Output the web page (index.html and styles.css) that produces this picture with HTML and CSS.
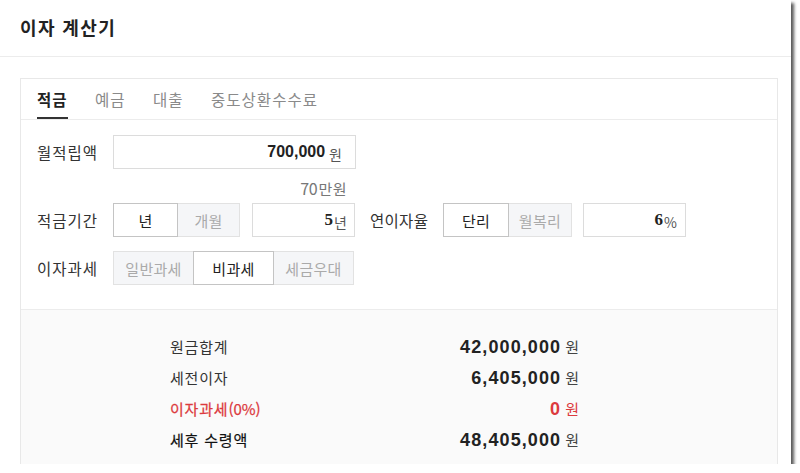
FILE: index.html
```html
<!DOCTYPE html>
<html lang="ko">
<head>
<meta charset="utf-8">
<title>이자 계산기</title>
<link rel="stylesheet" href="styles.css">
</head>
<body>
<div class="frame">
  <header class="title-bar"><h1 class="title">이자 계산기</h1></header>
  <section class="card">
    <nav class="tabs">
      <span class="tab active">적금</span>
      <span class="tab">예금</span>
      <span class="tab">대출</span>
      <span class="tab">중도상환수수료</span>
    </nav>
    <div class="form">
      <div class="row">
        <span class="label">월적립액</span>
        <div class="field field-wide"><b class="num">700,000</b><span class="unit">원</span></div>
      </div>
      <div class="hint"><span class="hint-num">70</span>만원</div>
      <div class="row">
        <span class="label">적금기간</span>
        <div class="toggle">
          <span class="opt opt-a on">년</span>
          <span class="opt opt-b">개월</span>
        </div>
        <div class="field field-small"><b class="num serif">5</b><span class="unit tight">년</span></div>
        <span class="label label-mid">연이자율</span>
        <div class="toggle">
          <span class="opt opt-c on">단리</span>
          <span class="opt opt-d">월복리</span>
        </div>
        <div class="field field-small field-rate"><b class="num serif">6</b><span class="unit tight">%</span></div>
      </div>
      <div class="row row-gap">
        <span class="label">이자과세</span>
        <div class="toggle">
          <span class="opt opt-e">일반과세</span>
          <span class="opt opt-e on">비과세</span>
          <span class="opt opt-e">세금우대</span>
        </div>
      </div>
    </div>
    <div class="result">
      <div class="res-row">
        <span class="res-label">원금합계</span>
        <span class="res-value"><b class="res-num">42,000,000</b><span class="res-unit">원</span></span>
      </div>
      <div class="res-row">
        <span class="res-label">세전이자</span>
        <span class="res-value"><b class="res-num">6,405,000</b><span class="res-unit">원</span></span>
      </div>
      <div class="res-row red">
        <span class="res-label">이자과세<span class="paren">(0%)</span></span>
        <span class="res-value"><b class="res-num">0</b><span class="res-unit">원</span></span>
      </div>
      <div class="res-row total">
        <span class="res-label">세후 수령액</span>
        <span class="res-value"><b class="res-num">48,405,000</b><span class="res-unit">원</span></span>
      </div>
    </div>
  </section>
</div>
</body>
</html>
```
FILE: styles.css
```css
* { box-sizing: border-box; }
html, body { margin: 0; padding: 0; background: #fff; }
body {
  font-family: "Noto Sans CJK KR", "Noto Sans", sans-serif;
  color: #333;
}
.frame {
  width: 791px;
  height: 464px;
  overflow: hidden;
  background: #fff;
  box-shadow: 3px 3px 3px rgba(0,0,0,0.65);
}
.title-bar {
  height: 57px;
  border-bottom: 1px solid #ececec;
  display: flex;
  align-items: center;
  padding-left: 20px;
  padding-bottom: 2px;
}
.title {
  margin: 0;
  font-size: 18px;
  font-weight: 700;
  color: #222;
  letter-spacing: 1.4px;
}
.card {
  margin: 21px 0 0 20px;
  width: 758px;
  border: 1px solid #e8e8e8;
  border-bottom: none;
  height: 400px;
}
.tabs {
  display: flex;
  gap: 27.5px;
  height: 41px;
  padding-left: 16px;
  border-bottom: 1px solid #ececec;
}
.tab {
  display: flex;
  align-items: center;
  height: 40px;
  font-size: 15.5px;
  letter-spacing: 1px;
  color: #8a8a8a;
  padding-bottom: 1px;
}
.tab.active {
  color: #222;
  font-weight: 700;
  box-shadow: inset 0 -2px 0 #333;
}
.form {
  padding: 15px 0 24px 16px;
}
.row {
  display: flex;
  align-items: center;
  height: 34px;
}
.row-gap { margin-top: 14px; }
.label {
  width: 76px;
  font-size: 15.5px;
  letter-spacing: 1px;
  color: #333;
}
.label-mid {
  width: 73px;
  margin-left: 15px;
  letter-spacing: 0.3px;
}
.field {
  height: 34px;
  border: 1px solid #dcdcdc;
  background: #fff;
  display: flex;
  align-items: center;
  justify-content: flex-end;
  padding-right: 13px;
}
.field-wide { width: 243px; }
.field-small { width: 103px; margin-left: 12px; padding-right: 7px; }
.field-rate { margin-left: 11px; padding-right: 8px; }
.num {
  font-family: "Liberation Sans", sans-serif;
  font-weight: 700;
  font-size: 16px;
  color: #222;
}
.num.serif {
  font-family: "Liberation Serif", serif;
  font-size: 17px;
}
.unit {
  font-size: 14px;
  color: #555;
  margin-left: 4px;
  padding-top: 3px;
}
.unit.tight { margin-left: 1px; }
.hint {
  width: 310px;
  height: 34px;
  padding-top: 9px;
  text-align: right;
  font-size: 15px;
  letter-spacing: 0.5px;
  line-height: 20px;
  color: #777;
}
.hint-num {
  font-size: 16px;
  letter-spacing: -0.3px;
  margin-right: 1px;
}
.toggle {
  display: flex;
  height: 34px;
}
.opt {
  display: flex;
  align-items: center;
  justify-content: center;
  height: 34px;
  border: 1px solid #e2e2e2;
  background: #f5f6f8;
  color: #aaa;
  font-size: 15px;
  letter-spacing: 0.3px;
  margin-left: -1px;
}
.opt:first-child { margin-left: 0; }
.opt.on {
  background: #fff;
  color: #222;
  border-color: #c4c4c4;
  position: relative;
}
.opt-a { width: 65px; }
.opt-b { width: 63px; }
.opt-c { width: 66px; }
.opt-d { width: 64px; }
.opt-e { width: 81px; }
.result {
  border-top: 1px solid #ececec;
  background: #fafafa;
  padding: 21px 0 0 149px;
  height: 200px;
}
.res-row {
  display: flex;
  align-items: center;
  justify-content: space-between;
  width: 409px;
  height: 31px;
}
.res-label {
  font-size: 15px;
  letter-spacing: 0.8px;
  color: #333;
}
.paren { letter-spacing: 0; }
.res-value {
  display: flex;
  align-items: baseline;
}
.res-num {
  font-family: "Liberation Sans", sans-serif;
  font-weight: 700;
  font-size: 18px;
  letter-spacing: 1.1px;
  color: #222;
}
.res-unit {
  font-size: 15px;
  color: #444;
  margin-left: 4px;
}
.red .res-label, .red .res-num, .red .res-unit { color: #dc3a3e; }
.total .res-label { color: #111; font-weight: 400; -webkit-text-stroke: 0.2px #111; }
.red .res-label { -webkit-text-stroke: 0.25px #dc3a3e; }
```
